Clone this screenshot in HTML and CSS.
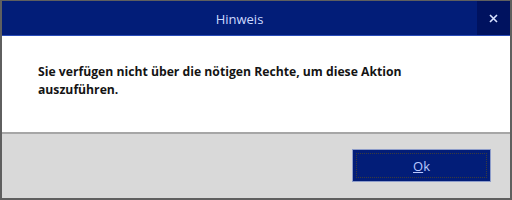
FILE: index.html
```html
<!DOCTYPE html>
<html>
<head>
<meta charset="utf-8">
<link rel="stylesheet" href="styles.css">
</head>
<body>
<div class="window">
  <div class="titlebar">
    <div class="title">Hinweis</div>
    <div class="close">
      <svg width="9" height="9" viewBox="0 0 9 9"><path d="M1 1L8 8M8 1L1 8" stroke="#d8e2ff" stroke-width="1.6"/></svg>
    </div>
  </div>
  <div class="content">
    <p class="message">Sie verfügen nicht über die nötigen Rechte, um diese Aktion auszuführen.</p>
  </div>
  <div class="footer">
    <button class="ok"><span class="focus"><u>O</u>k</span></button>
  </div>
</div>
</body>
</html>
```
FILE: styles.css
```css
html, body { margin: 0; padding: 0; }
body { width: 512px; height: 200px; overflow: hidden; font-family: "Open Sans", "Noto Sans", sans-serif; }
.window {
  box-sizing: border-box;
  width: 512px; height: 200px;
  border: 2px solid #5f5f5f;
  border-top-width: 1px;
  display: flex; flex-direction: column;
  background: #fff;
}
.titlebar {
  height: 34px;
  background: #021d78;
  border-bottom: 1px solid #2a4cb8;
  display: flex;
  flex-shrink: 0;
}
.title {
  flex: 1;
  display: flex; align-items: center; justify-content: center;
  color: #cdd9ff;
  font-size: 13px;
  padding-top: 1px;
}
.close {
  width: 33px;
  background: #00125f;
  display: flex; align-items: center; justify-content: center;
}
.content {
  height: 98px;
  flex-shrink: 0;
  border-bottom: 2px solid #a6a6a6;
  box-sizing: border-box;
  padding: 27px 0 0 36px;
}
.message {
  margin: 0;
  width: 400px;
  font-weight: bold;
  font-size: 12.2px;
  line-height: 18px;
  color: #141414;
}
.footer {
  flex: 1;
  background: #d9d9d9;
  display: flex; justify-content: flex-end; align-items: flex-start;
  padding: 15px 19px 0 0;
}
.ok {
  width: 139px; height: 33px;
  box-sizing: border-box;
  background: #021d78;
  border: 1px solid #8d9cc9;
  padding: 3px;
  margin: 0;
  display: flex;
  font-family: inherit;
}
.focus {
  flex: 1;
  border: 1px dotted #3c3c3c;
  display: flex; align-items: center; justify-content: center;
  color: #b9c9ff;
  font-size: 13px;
}
```
